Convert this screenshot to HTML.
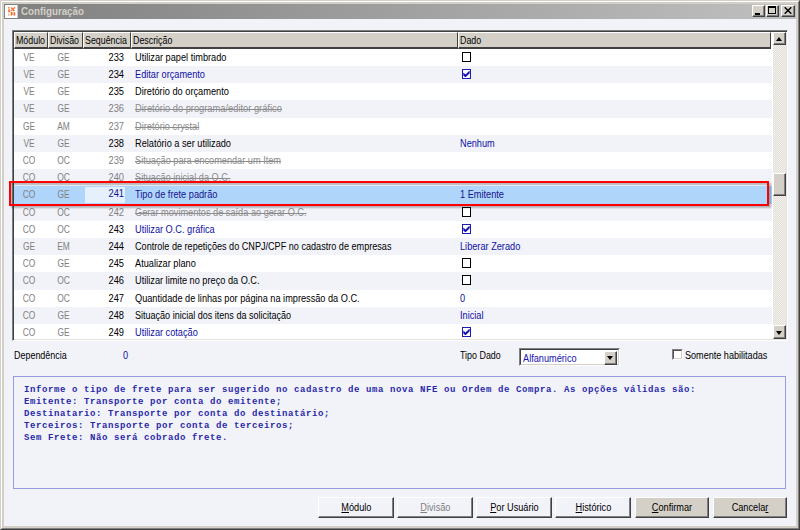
<!DOCTYPE html>
<html lang="pt-BR">
<head>
<meta charset="utf-8">
<title>Configuração</title>
<style>
html,body{margin:0;padding:0;}
body{width:800px;height:530px;overflow:hidden;background:#f2f3f9;font-family:"Liberation Sans","DejaVu Sans",sans-serif;font-size:10px;color:#000;position:relative;}
*{box-sizing:border-box;}
i{font-style:normal;display:block;}
.abs{position:absolute;}
#win{position:absolute;left:0;top:0;width:800px;height:530px;background:#f2f3f9;
 border-left:1px solid #d4d0c8;border-top:1px solid #d4d0c8;border-right:1px solid #404040;border-bottom:1px solid #404040;}
#win2{position:absolute;left:1px;top:1px;width:798px;height:528px;
 border-left:1px solid #fff;border-top:1px solid #fff;border-right:1px solid #808080;border-bottom:1px solid #808080;}
#win3{position:absolute;left:2px;top:2px;width:796px;height:526px;border:2px solid #d4d0c8;}
#title{position:absolute;left:4px;top:4px;width:792px;height:15px;background:linear-gradient(to right,#808080,#c0c0c0);}
#title .t{transform:scaleX(.93);transform-origin:0 0;position:absolute;left:17px;top:0;height:15px;line-height:15px;font-weight:bold;font-size:10.500px;color:#d4d0c8;white-space:nowrap;}
.tb{position:absolute;top:5px;width:13px;height:12px;background:#d4d0c8;
 border-left:1px solid #fff;border-top:1px solid #fff;border-right:1px solid #404040;border-bottom:1px solid #404040;box-shadow:inset -1px -1px 0 #808080;}
#grid{position:absolute;left:12px;top:30px;width:776px;height:311px;border:1px solid #808080;border-right-color:#fff;border-bottom-color:#fff;background:#fff;box-shadow:inset 1px 1px 0 #404040,inset -1px -1px 0 #e4e2dc;}
.hd{position:absolute;top:32px;height:17px;background:#d4d0c8;line-height:16px;white-space:nowrap;padding-left:1px;
 border-left:1px solid #fff;border-top:1px solid #fff;border-right:1px solid #404040;border-bottom:2px solid #404040;}
.row{position:absolute;left:14px;width:758px;}
.row.w{background:#fff;}
.row.l{background:#f2f3f9;}
.row.sel{background:#b0d5fb;}
.c{position:absolute;top:var(--fy);height:17px;line-height:17px;white-space:nowrap;transform:scaleX(.9185);transform-origin:0 0;}
.mod,.div{transform-origin:50% 0;transform:scaleX(.84);}
.seq{transform-origin:100% 0;transform:scaleX(.93);}
.s{display:inline-block;transform:scaleX(.9185);transform-origin:0 0;white-space:nowrap;}
.btn .s{transform-origin:50% 0;}
.hd .s{transform:scaleX(.885);}
.mod{left:-2.500px;width:34px;text-align:center;color:#808080;}
.div{left:32px;width:35px;text-align:center;color:#808080;}
.seq{left:68px;width:42px;text-align:right;}
.seq.g{color:#808080;}
.desc{left:120.500px;}
.dado{left:446px;}
.blue{color:#1010a4;}
.row.sel .blue{color:#14148c;}
.row.sel .seq{top:calc(var(--fy) - 1px);}
.st{color:#8c8c8c;text-decoration:line-through;}
.seqbg{position:absolute;left:71px;top:1px;width:40px;height:16px;background:#e6f0fd;}
.cb{position:absolute;left:448px;top:3px;width:9px;height:10px;border:1px solid #000;background:#fff;}
.cb.on{border-color:#1c1cb4;}
.cb svg{position:absolute;left:0px;top:1px;display:block;}
#redbox{position:absolute;left:9px;top:181px;width:760px;height:25px;border:2px solid #f00;box-shadow:2px 2px 1.500px rgba(0,0,0,.25),inset 2px 2px 1.500px rgba(0,0,0,.25);}
#sb{position:absolute;left:773px;top:32px;width:13px;height:307px;
 background-color:#eae8e3;background-image:conic-gradient(#f3f2ef 25%,#e1ded8 0 50%,#f3f2ef 0 75%,#e1ded8 0);background-size:2px 2px;}
.sbb{position:absolute;left:773px;width:13px;background:#d4d0c8;
 border-left:1px solid #fff;border-top:1px solid #fff;border-right:1px solid #404040;border-bottom:1px solid #404040;box-shadow:inset -1px -1px 0 #808080;}
.lbl{position:absolute;white-space:nowrap;line-height:14px;transform:scaleX(.9185);transform-origin:0 0;}
#memo{position:absolute;left:13px;top:376px;width:773px;height:113px;border:1px solid #9a9ade;background:#f2f3f9;}
#memo pre{margin:0;position:absolute;left:10px;top:7px;font-family:"Liberation Mono","DejaVu Sans Mono",monospace;font-weight:bold;font-size:9px;letter-spacing:0.600px;line-height:12px;color:#2a2aa8;}
.btn{position:absolute;top:497px;width:76px;height:21px;text-align:center;line-height:20px;white-space:nowrap;
 border-left:1px solid #fff;border-top:1px solid #fff;border-right:1px solid #404040;border-bottom:1px solid #404040;box-shadow:inset -1px -1px 0 #808080;background:#f2f3f9;}
.btn.g{background:#d4d0c8;}
.btn.dis{color:#808080;}
u{text-decoration:underline;}
#combo{position:absolute;left:519px;top:348px;width:101px;height:18px;background:#fff;
 border-left:1px solid #808080;border-top:1px solid #808080;border-right:1px solid #fff;border-bottom:1px solid #fff;}
#combo .in{position:absolute;left:0;top:0;right:0;bottom:0;border-left:1px solid #404040;border-top:1px solid #404040;border-right:1px solid #d4d0c8;border-bottom:1px solid #d4d0c8;}
#combo .tx{transform:scaleX(.9185);transform-origin:0 0;position:absolute;left:3px;top:2.500px;line-height:13px;color:#1414ac;white-space:nowrap;}
#combo .dd{position:absolute;right:2px;top:2px;width:13px;height:14px;background:#d4d0c8;
 border-left:1px solid #fff;border-top:1px solid #fff;border-right:1px solid #404040;border-bottom:1px solid #404040;box-shadow:inset -1px -1px 0 #808080;}
.arr{position:absolute;width:0;height:0;border-left:3px solid transparent;border-right:3px solid transparent;}
.arr.dn{border-top:3px solid #000;}
.arr.up{border-bottom:3px solid #000;}
#chk{position:absolute;left:672px;top:349px;width:11px;height:11px;background:#fff;border-left:1px solid #808080;border-top:1px solid #808080;border-right:1px solid #fff;border-bottom:1px solid #fff;}
#chk i{position:absolute;left:0;top:0;right:0;bottom:0;border-left:1px solid #505050;border-top:1px solid #505050;border-right:1px solid #d4d0c8;border-bottom:1px solid #d4d0c8;}
</style>
</head>
<body>
<div id="win"></div><div id="win2"></div><div id="win3"></div>
<div id="title">
 <svg class="abs" style="left:1.400px;top:0.750px" width="13" height="13" viewBox="0 0 13 13"><rect x="0" y="0" width="12.600" height="13" fill="#fff"/><g fill="#f4651c"><rect x="3" y="2.200" width="1.500" height="1.300"/><rect x="8.700" y="2.200" width="1.500" height="1.300"/><path d="M5.500 2.800l1.200-.600l3.200 3.400l-1.200.800z"/><path d="M8.300 2.800l1 .700l-2.800 3l-1-.800z" opacity=".8"/><path d="M3 4.600l2-.400l.5 2.600l-2.200.700z" opacity=".85"/><rect x="3.200" y="9.300" width="1.200" height="1.300" opacity=".8"/><rect x="5.700" y="7.100" width="1.800" height="3.300"/><rect x="8.500" y="7.300" width="1.700" height="3.200"/><rect x="3.300" y="7.600" width="1" height="1" opacity=".5"/></g></svg>
 <span class="t">Configuração</span>
</div>
<div class="tb" style="left:752px"><i class="abs" style="left:2px;top:7px;width:5px;height:2px;background:#000"></i></div>
<div class="tb" style="left:766px"><i class="abs" style="left:1px;top:0px;width:8px;height:8px;border:1px solid #000;border-top-width:2px"></i></div>
<div class="tb" style="left:781px;width:14px"><svg class="abs" style="left:2px;top:1px" width="8" height="7" viewBox="0 0 8 7"><path d="M0.700 0.300l6.600 6.400M7.300 0.300l-6.600 6.400" stroke="#000" stroke-width="1.500" fill="none"/></svg></div>

<div id="grid"></div>
<div class="hd" style="left:14px;width:34px"><span class="s">Módulo</span></div>
<div class="hd" style="left:48px;width:35px"><span class="s">Divisão</span></div>
<div class="hd" style="left:83px;width:48px"><span class="s">Sequência</span></div>
<div class="hd" style="left:131px;width:327px"><span class="s">Descrição</span></div>
<div class="hd" style="left:458px;width:313px"><span class="s">Dado</span></div>
<div class="row w" style="top:49px;height:17px;--fy:-0.3px">
<span class="c mod">VE</span><span class="c div">GE</span>
<span class="c seq">233</span>
<span class="c desc">Utilizar papel timbrado</span>
<i class="cb"></i>
</div>
<div class="row l" style="top:66px;height:17px;--fy:-0.1px">
<span class="c mod">VE</span><span class="c div">GE</span>
<span class="c seq">234</span>
<span class="c desc blue">Editar orçamento</span>
<i class="cb on"><svg width="7" height="6" viewBox="0 0 7 6"><path d="M0.300 1.600v2.800l2.200 2l4.200-4.200v-2.800l-4.200 4.200z" fill="#1414ac"/></svg></i>
</div>
<div class="row w" style="top:83px;height:17px;--fy:0.1px">
<span class="c mod">VE</span><span class="c div">GE</span>
<span class="c seq">235</span>
<span class="c desc" style="transform:scaleX(.923)">Diretório do orçamento</span>
</div>
<div class="row l" style="top:100px;height:18px;--fy:0.3px">
<span class="c mod">VE</span><span class="c div">GE</span>
<span class="c seq g">236</span>
<span class="c desc st" style="transform:scaleX(.93)">Diretório do programa/editor gráfico</span>
</div>
<div class="row w" style="top:118px;height:17px;--fy:-0.5px">
<span class="c mod">GE</span><span class="c div">AM</span>
<span class="c seq g">237</span>
<span class="c desc st" style="transform:scaleX(.925)">Diretório crystal</span>
</div>
<div class="row l" style="top:135px;height:17px;--fy:-0.3px">
<span class="c mod">VE</span><span class="c div">GE</span>
<span class="c seq">238</span>
<span class="c desc">Relatório a ser utilizado</span>
<span class="c dado blue">Nenhum</span>
</div>
<div class="row w" style="top:152px;height:17px;--fy:-0.1px">
<span class="c mod">CO</span><span class="c div">OC</span>
<span class="c seq g">239</span>
<span class="c desc st">Situação para encomendar um Item</span>
</div>
<div class="row l" style="top:169px;height:17px;--fy:0.1px">
<span class="c mod">CO</span><span class="c div">OC</span>
<span class="c seq g">240</span>
<span class="c desc st">Situação inicial da O.C.</span>
</div>
<div class="row sel" style="top:186px;height:18px;--fy:0.3px">
<span class="c mod">CO</span><span class="c div">GE</span>
<i class="seqbg"></i>
<span class="c seq blue">241</span>
<span class="c desc blue">Tipo de frete padrão</span>
<span class="c dado blue">1 Emitente</span>
</div>
<div class="row l" style="top:204px;height:17px;--fy:-0.5px">
<span class="c mod">CO</span><span class="c div">OC</span>
<span class="c seq g">242</span>
<span class="c desc st">Gerar movimentos de saída ao gerar O.C.</span>
<i class="cb"></i>
</div>
<div class="row w" style="top:221px;height:17px;--fy:-0.3px">
<span class="c mod">CO</span><span class="c div">OC</span>
<span class="c seq">243</span>
<span class="c desc blue">Utilizar O.C. gráfica</span>
<i class="cb on"><svg width="7" height="6" viewBox="0 0 7 6"><path d="M0.300 1.600v2.800l2.200 2l4.200-4.200v-2.800l-4.200 4.200z" fill="#1414ac"/></svg></i>
</div>
<div class="row l" style="top:238px;height:17px;--fy:-0.1px">
<span class="c mod">GE</span><span class="c div">EM</span>
<span class="c seq">244</span>
<span class="c desc" style="transform:scaleX(.91)">Controle de repetições do CNPJ/CPF no cadastro de empresas</span>
<span class="c dado blue">Liberar Zerado</span>
</div>
<div class="row w" style="top:255px;height:17px;--fy:0.1px">
<span class="c mod">CO</span><span class="c div">GE</span>
<span class="c seq">245</span>
<span class="c desc">Atualizar plano</span>
<i class="cb"></i>
</div>
<div class="row l" style="top:272px;height:18px;--fy:0.3px">
<span class="c mod">CO</span><span class="c div">OC</span>
<span class="c seq">246</span>
<span class="c desc">Utilizar limite no preço da O.C.</span>
<i class="cb"></i>
</div>
<div class="row w" style="top:290px;height:17px;--fy:-0.5px">
<span class="c mod">CO</span><span class="c div">OC</span>
<span class="c seq">247</span>
<span class="c desc">Quantidade de linhas por página na impressão da O.C.</span>
<span class="c dado blue">0</span>
</div>
<div class="row l" style="top:307px;height:17px;--fy:-0.3px">
<span class="c mod">CO</span><span class="c div">GE</span>
<span class="c seq">248</span>
<span class="c desc" style="transform:scaleX(.903)">Situação inicial dos itens da solicitação</span>
<span class="c dado blue">Inicial</span>
</div>
<div class="row w" style="top:324px;height:15px;--fy:-0.1px">
<span class="c mod">CO</span><span class="c div">GE</span>
<span class="c seq">249</span>
<span class="c desc blue">Utilizar cotação</span>
<i class="cb on"><svg width="7" height="6" viewBox="0 0 7 6"><path d="M0.300 1.600v2.800l2.200 2l4.200-4.200v-2.800l-4.200 4.200z" fill="#1414ac"/></svg></i>
</div>
<div id="sb"></div>
<div class="sbb" style="top:32px;height:13px"><i class="arr up" style="left:2px;top:3.500px;border-left-width:3.500px;border-right-width:3.500px;border-bottom-width:4px"></i></div>
<div class="sbb" style="top:173px;height:23px"></div>
<div class="sbb" style="top:325px;height:14px"><i class="arr dn" style="left:2px;top:4.500px;border-left-width:3.500px;border-right-width:3.500px;border-top-width:4px"></i></div>
<div id="redbox"></div>

<span class="lbl" style="left:14px;top:349px;transform:scaleX(.895)">Dependência</span>
<span class="lbl blue" style="left:123px;top:349px">0</span>
<span class="lbl" style="left:459.500px;top:349px;transform:scaleX(.89)">Tipo Dado</span>
<div id="combo"><div class="in"></div><span class="tx">Alfanumérico</span><div class="dd"><i class="arr dn" style="left:2px;top:4px;border-left-width:3.500px;border-right-width:3.500px;border-top-width:4px"></i></div></div>
<div id="chk"><i></i></div>
<span class="lbl" style="left:684.500px;top:349px;transform:scaleX(.908)">Somente habilitadas</span>

<div id="memo"><pre>Informe o tipo de frete para ser sugerido no cadastro de uma nova NFE ou Ordem de Compra. As opções válidas são:
Emitente: Transporte por conta do emitente;
Destinatario: Transporte por conta do destinatário;
Terceiros: Transporte por conta de terceiros;
Sem Frete: Não será cobrado frete.</pre></div>

<div class="btn" style="left:318px"><span class="s"><u>M</u>ódulo</span></div>
<div class="btn dis" style="left:397px"><span class="s"><u>D</u>ivisão</span></div>
<div class="btn" style="left:476px"><span class="s"><u>P</u>or Usuário</span></div>
<div class="btn" style="left:555px"><span class="s"><u>H</u>istórico</span></div>
<div class="btn g" style="left:635px;width:74px"><span class="s"><u>C</u>onfirmar</span></div>
<div class="btn g" style="left:713px;width:74px"><span class="s">Cancela<u>r</u></span></div>
</body>
</html>
